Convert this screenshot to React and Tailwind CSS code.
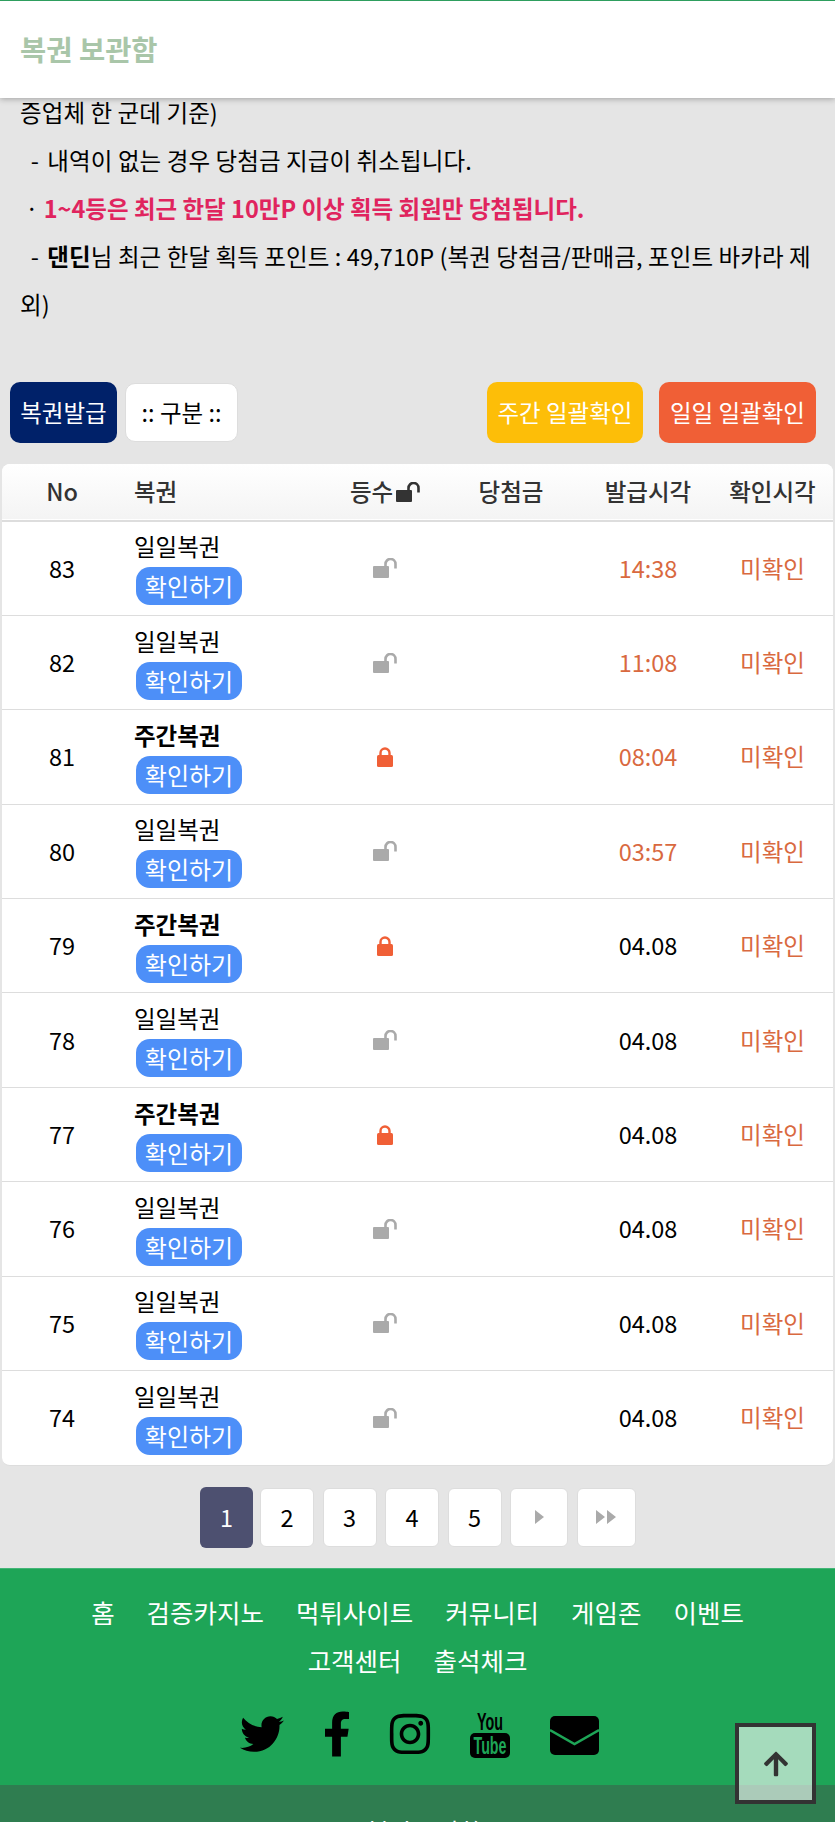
import { FaTwitter, FaFacebookF, FaInstagram, FaArrowUp } from "react-icons/fa";

const rows = [
  { no: 83, name: "일일복권", time: "14:38", today: true },
  { no: 82, name: "일일복권", time: "11:08", today: true },
  { no: 81, name: "주간복권", time: "08:04", today: true, weekly: true },
  { no: 80, name: "일일복권", time: "03:57", today: true },
  { no: 79, name: "주간복권", time: "04.08", weekly: true },
  { no: 78, name: "일일복권", time: "04.08" },
  { no: 77, name: "주간복권", time: "04.08", weekly: true },
  { no: 76, name: "일일복권", time: "04.08" },
  { no: 75, name: "일일복권", time: "04.08" },
  { no: 74, name: "일일복권", time: "04.08" },
];

const footerLinks = ["홈", "검증카지노", "먹튀사이트", "커뮤니티", "게임존", "이벤트", "고객센터", "출석체크"];

const OpenLock = ({ className }) => (
  <svg viewBox="0 0 24 20" className={className} fill="currentColor">
    <rect x="0" y="8" width="16" height="12" rx="1" />
    <path d="M12.5 9V6a5 5 0 0 1 10 0v4.500" fill="none" stroke="currentColor" strokeWidth="2.600" />
  </svg>
);

const ClosedLock = () => (
  <svg viewBox="0 0 16 20" className="w-4 h-5 text-[#f05f36]" fill="currentColor">
    <rect x="0" y="8" width="16" height="12" rx="1.500" />
    <path d="M3.500 9V6a4.500 4.500 0 0 1 9 0v3" fill="none" stroke="currentColor" strokeWidth="2.400" />
  </svg>
);

const YouTubeMark = () => (
  <svg viewBox="0 0 40 48" className="w-[40px] h-[48px] overflow-visible">
    <text x="20" y="20" textAnchor="middle" textLength="26" lengthAdjust="spacingAndGlyphs" fontFamily="Liberation Sans" fontWeight="700" fontSize="23" fill="#000">
      You
    </text>
    <rect x="0" y="23" width="40" height="25" rx="5" fill="#000" />
    <text x="20" y="44" textAnchor="middle" textLength="33" lengthAdjust="spacingAndGlyphs" fontFamily="Liberation Sans" fontWeight="700" fontSize="23" fill="#1ea557">
      Tube
    </text>
  </svg>
);

const MailIcon = () => (
  <svg viewBox="0 0 49 39" className="w-[49px] h-[39px]">
    <rect width="49" height="39" rx="5" fill="#000" />
    <path d="M0 14l24.500 14L49 14" fill="none" stroke="#1ea557" strokeWidth="2.400" />
  </svg>
);

export default function App() {
  return (
    <div className="relative h-[1822px] overflow-hidden bg-[#e5e5e5] text-[23.500px] text-black font-['Noto_Sans_CJK_KR','Noto_Sans',sans-serif]">
      {/* Header */}
      <header className="absolute top-0 left-0 right-0 z-10 h-[98px] bg-white border-t border-[#2e9e5e] shadow-[0_1px_6px_rgba(0,0,0,0.3)] flex items-center pl-[20px]">
        <h1 className="text-[28.500px] font-bold text-[#a9c6a9]">복권 보관함</h1>
      </header>

      {/* Notice */}
      <div className="pt-[88px] px-[20px] leading-[48px] h-[382px]">
        <p className="tracking-[0.1px]">증업체 한 군데 기준)</p>
        <p className="tracking-[0.1px] whitespace-pre">
          {"  - "}
          <span className="ml-[3px]">내역이 없는 경우 당첨금 지급이 취소됩니다.</span>
        </p>
        <p className="whitespace-pre">
          {" · "}
          <b className="text-[#e0245e]">1~4등은 최근 한달 10만P 이상 획득 회원만 당첨됩니다.</b>
        </p>
        <p className="tracking-[0.1px] whitespace-pre-wrap">
          {"  - "}
          <b className="ml-[3px]">댄딘</b>님 최근 한달 획득 포인트 : 49,710P (복권 당첨금/판매금, 포인트 바카라 제외)
        </p>
      </div>

      {/* Buttons */}
      <div className="flex items-center pl-[10px] pr-[19px] h-[61px]">
        <button className="w-[107px] h-[61px] rounded-[10px] bg-[#002169] text-white">복권발급</button>
        <button className="ml-[8px] w-[113px] h-[59px] rounded-[10px] bg-white border border-[#ddd]">:: 구분 ::</button>
        <button className="ml-auto w-[156px] h-[61px] rounded-[10px] bg-[#fdbe08] text-white">주간 일괄확인</button>
        <button className="ml-[16px] w-[157px] h-[61px] rounded-[10px] bg-[#f05f36] text-white">일일 일괄확인</button>
      </div>

      {/* Table */}
      <div className="mt-[21px] mx-[2px] bg-white rounded-[8px] overflow-hidden border-b border-[#ddd]">
        <table className="w-full table-fixed border-collapse">
          <colgroup>
            <col className="w-[120px]" />
            <col className="w-[206px]" />
            <col className="w-[114px]" />
            <col className="w-[138px]" />
            <col className="w-[136px]" />
            <col />
          </colgroup>
          <thead>
            <tr className="h-[57px] bg-gradient-to-b from-white to-[#f4f4f4] border-b-2 border-[#ddd] text-[#333]">
              <th className="font-medium">No</th>
              <th className="font-medium text-left pl-[12px]">복권</th>
              <th className="font-medium">
                <span className="inline-flex items-center gap-[3px]">
                  등수
                  <OpenLock className="w-[24px] h-[20px]" />
                </span>
              </th>
              <th className="font-medium">당첨금</th>
              <th className="font-medium">발급시각</th>
              <th className="font-medium pr-[4px]">확인시각</th>
            </tr>
          </thead>
          <tbody>
            {rows.map((r) => (
              <tr key={r.no} className="h-[94.400px] border-b border-[#ddd] last:border-b-0">
                <td className="text-center">{r.no}</td>
                <td className="pl-[12px]">
                  <div className={`leading-[30px] ${r.weekly ? "font-bold" : ""}`}>{r.name}</div>
                  <button className="mt-[6px] ml-[2px] block w-[106px] h-[38px] rounded-[14px] bg-[#4d8ff8] text-white text-[24px] leading-[38px]">
                    확인하기
                  </button>
                </td>
                <td>
                  <div className="flex justify-center">
                    {r.weekly ? <ClosedLock /> : <OpenLock className="w-[24px] h-[20px] text-[#aaa]" />}
                  </div>
                </td>
                <td></td>
                <td className={`text-center ${r.today ? "text-[#d9693f]" : ""}`}>{r.time}</td>
                <td className="text-center pr-[4px] text-[#d9693f]">미확인</td>
              </tr>
            ))}
          </tbody>
        </table>
      </div>

      {/* Pagination */}
      <div className="mt-[21px] flex items-center pl-[200px] gap-[8.500px] h-[61px]">
        <span className="w-[53px] h-[61px] mr-[-1.500px] rounded-[6px] bg-[#4d5070] text-white flex items-center justify-center">1</span>
        {[2, 3, 4, 5].map((n) => (
          <span key={n} className="w-[54px] h-[59px] rounded-[6px] bg-white border border-[#ddd] flex items-center justify-center">
            {n}
          </span>
        ))}
        <span className="w-[58px] h-[59px] rounded-[6px] bg-white border border-[#ddd] flex items-center justify-center">
          <svg viewBox="0 0 9 14" className="w-[9px] h-[14px] text-[#aaa]" fill="currentColor">
            <path d="M0 0l9 7-9 7z" />
          </svg>
        </span>
        <span className="w-[59px] h-[59px] rounded-[6px] bg-white border border-[#ddd] flex items-center justify-center">
          <svg viewBox="0 0 20 14" className="w-[20px] h-[14px] text-[#aaa]" fill="currentColor">
            <path d="M0 0l9 7-9 7zM11 0l9 7-9 7z" />
          </svg>
        </span>
      </div>

      {/* Footer */}
      <footer className="mt-[20px] bg-[#1ea557] border-t border-[#43b577] text-white">
        <div className="h-[216px] pt-[19px]">
          <nav className="flex flex-wrap justify-center gap-x-[32px] px-[80px] text-[25.500px] leading-[48px]">
            {footerLinks.map((l) => (
              <a key={l}>{l}</a>
            ))}
          </nav>
          <div className="mt-[26px] flex items-center pl-[240px] text-black h-[48px]">
            <FaTwitter className="w-[44px] h-[44px]" />
            <FaFacebookF className="ml-[39px] w-[28px] h-[46px]" />
            <FaInstagram className="ml-[36px] w-[46px] h-[46px]" />
            <div className="ml-[37px]">
              <YouTubeMark />
            </div>
            <div className="ml-[40px] mt-[3px]">
              <MailIcon />
            </div>
          </div>
        </div>
        <div className="h-[60px] bg-[#2f7d50] text-center pt-[31px] pr-[44px] leading-[30px]">2024 복권 보관함</div>
      </footer>

      {/* Scroll to top */}
      <button className="absolute left-[735px] top-[1723px] w-[81px] h-[81px] border-[4px] border-[#333] bg-white/60 flex items-center justify-center">
        <FaArrowUp className="w-[28px] h-[28px] text-[#333]" />
      </button>
    </div>
  );
}
